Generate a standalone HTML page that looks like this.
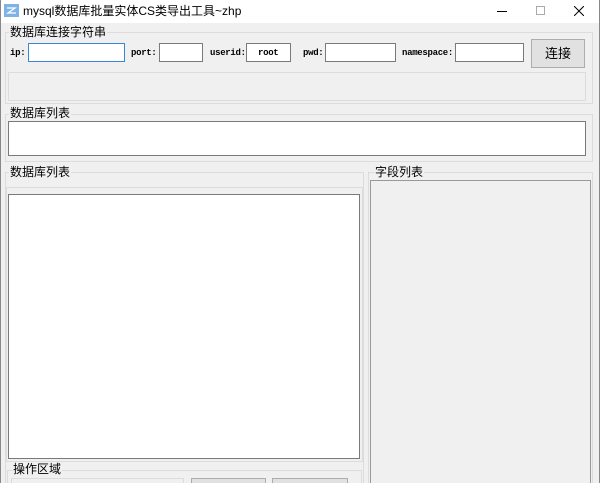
<!DOCTYPE html>
<html><head><meta charset="utf-8"><style>
*{margin:0;padding:0;box-sizing:border-box}
html,body{width:600px;height:483px;overflow:hidden}
body{background:#f0f0f0;font-family:"Liberation Sans","Noto Sans CJK SC",sans-serif;font-size:12px;color:#000;position:relative}
.a{position:absolute}
.t{background:#fff;border:1px solid #7a7a7a}
.g{position:absolute;border:1px solid #dcdcdc}
.lbl{position:absolute;background:#f0f0f0;font-size:12px;line-height:14px;padding:0 1px}
.m{font-family:"Liberation Mono",monospace;font-size:9px;font-weight:bold;position:absolute;line-height:12px;letter-spacing:-0.3px}
</style></head><body>
<div class="a" style="left:0;top:0;width:600px;height:23px;background:#fff"></div>
<svg class="a" style="left:4px;top:4px" width="15" height="13"><rect width="15" height="13" fill="#7fb3e6"/><path d="M3 4h8L4 9h8" stroke="#fff" stroke-width="1.3" fill="none"/></svg>
<div class="a" style="left:23px;top:4px;font-size:12px;line-height:14px">mysql数据库批量实体CS类导出工具~zhp</div>
<div class="a" style="left:497px;top:11px;width:10px;height:1px;background:#000"></div>
<div class="a" style="left:536px;top:6px;width:9px;height:9px;border:1px solid #aaa"></div>
<svg class="a" style="left:574px;top:6px" width="10" height="10"><path d="M0 0L10 10M10 0L0 10" stroke="#000" stroke-width="1"/></svg>
<div class="a" style="left:0;top:0;width:1px;height:483px;background:#888"></div>
<div class="a" style="left:599px;top:0;width:1px;height:483px;background:#888"></div>

<div class="g" style="left:5px;top:32px;width:588px;height:72px"></div>
<div class="lbl" style="left:9px;top:25px">数据库连接字符串</div>
<div class="m" style="left:10px;top:47px">ip:</div>
<div class="t a" style="left:28px;top:43px;width:97px;height:19px;border-color:#3c86d6"></div>
<div class="m" style="left:131px;top:47px">port:</div>
<div class="t a" style="left:159px;top:43px;width:44px;height:19px"></div>
<div class="m" style="left:210px;top:47px">userid:</div>
<div class="t a" style="left:246px;top:43px;width:45px;height:19px"></div>
<div class="m" style="left:258px;top:47px">root</div>
<div class="m" style="left:303px;top:47px">pwd:</div>
<div class="t a" style="left:325px;top:43px;width:71px;height:19px"></div>
<div class="m" style="left:402px;top:47px">namespace:</div>
<div class="t a" style="left:455px;top:43px;width:69px;height:19px"></div>
<div class="a" style="left:531px;top:39px;width:54px;height:29px;background:#e1e1e1;border:1px solid #adadad;text-align:center;line-height:27px;font-size:13px">连接</div>
<div class="a" style="left:8px;top:72px;width:578px;height:29px;border:1px solid #dcdcdc"></div>

<div class="g" style="left:5px;top:114px;width:588px;height:48px"></div>
<div class="lbl" style="left:9px;top:106px">数据库列表</div>
<div class="t a" style="left:8px;top:121px;width:578px;height:35px"></div>

<div class="g" style="left:5px;top:172px;width:359px;height:320px"></div>
<div class="lbl" style="left:9px;top:165px">数据库列表</div>
<div class="g" style="left:6px;top:187px;width:357px;height:275px"></div>
<div class="t a" style="left:8px;top:194px;width:352px;height:265px"></div>
<div class="g" style="left:7px;top:470px;width:355px;height:20px"></div>
<div class="lbl" style="left:12px;top:462px">操作区域</div>
<div class="a" style="left:11px;top:478px;width:173px;height:10px;border:1px solid #dcdcdc"></div>
<div class="a" style="left:191px;top:478px;width:75px;height:10px;background:#e1e1e1;border:1px solid #adadad"></div>
<div class="a" style="left:272px;top:478px;width:76px;height:10px;background:#e1e1e1;border:1px solid #adadad"></div>

<div class="g" style="left:368px;top:172px;width:225px;height:320px"></div>
<div class="lbl" style="left:374px;top:165px">字段列表</div>
<div class="a" style="left:370px;top:180px;width:221px;height:310px;border:1px solid #999;background:#f0f0f0"></div>
</body></html>
